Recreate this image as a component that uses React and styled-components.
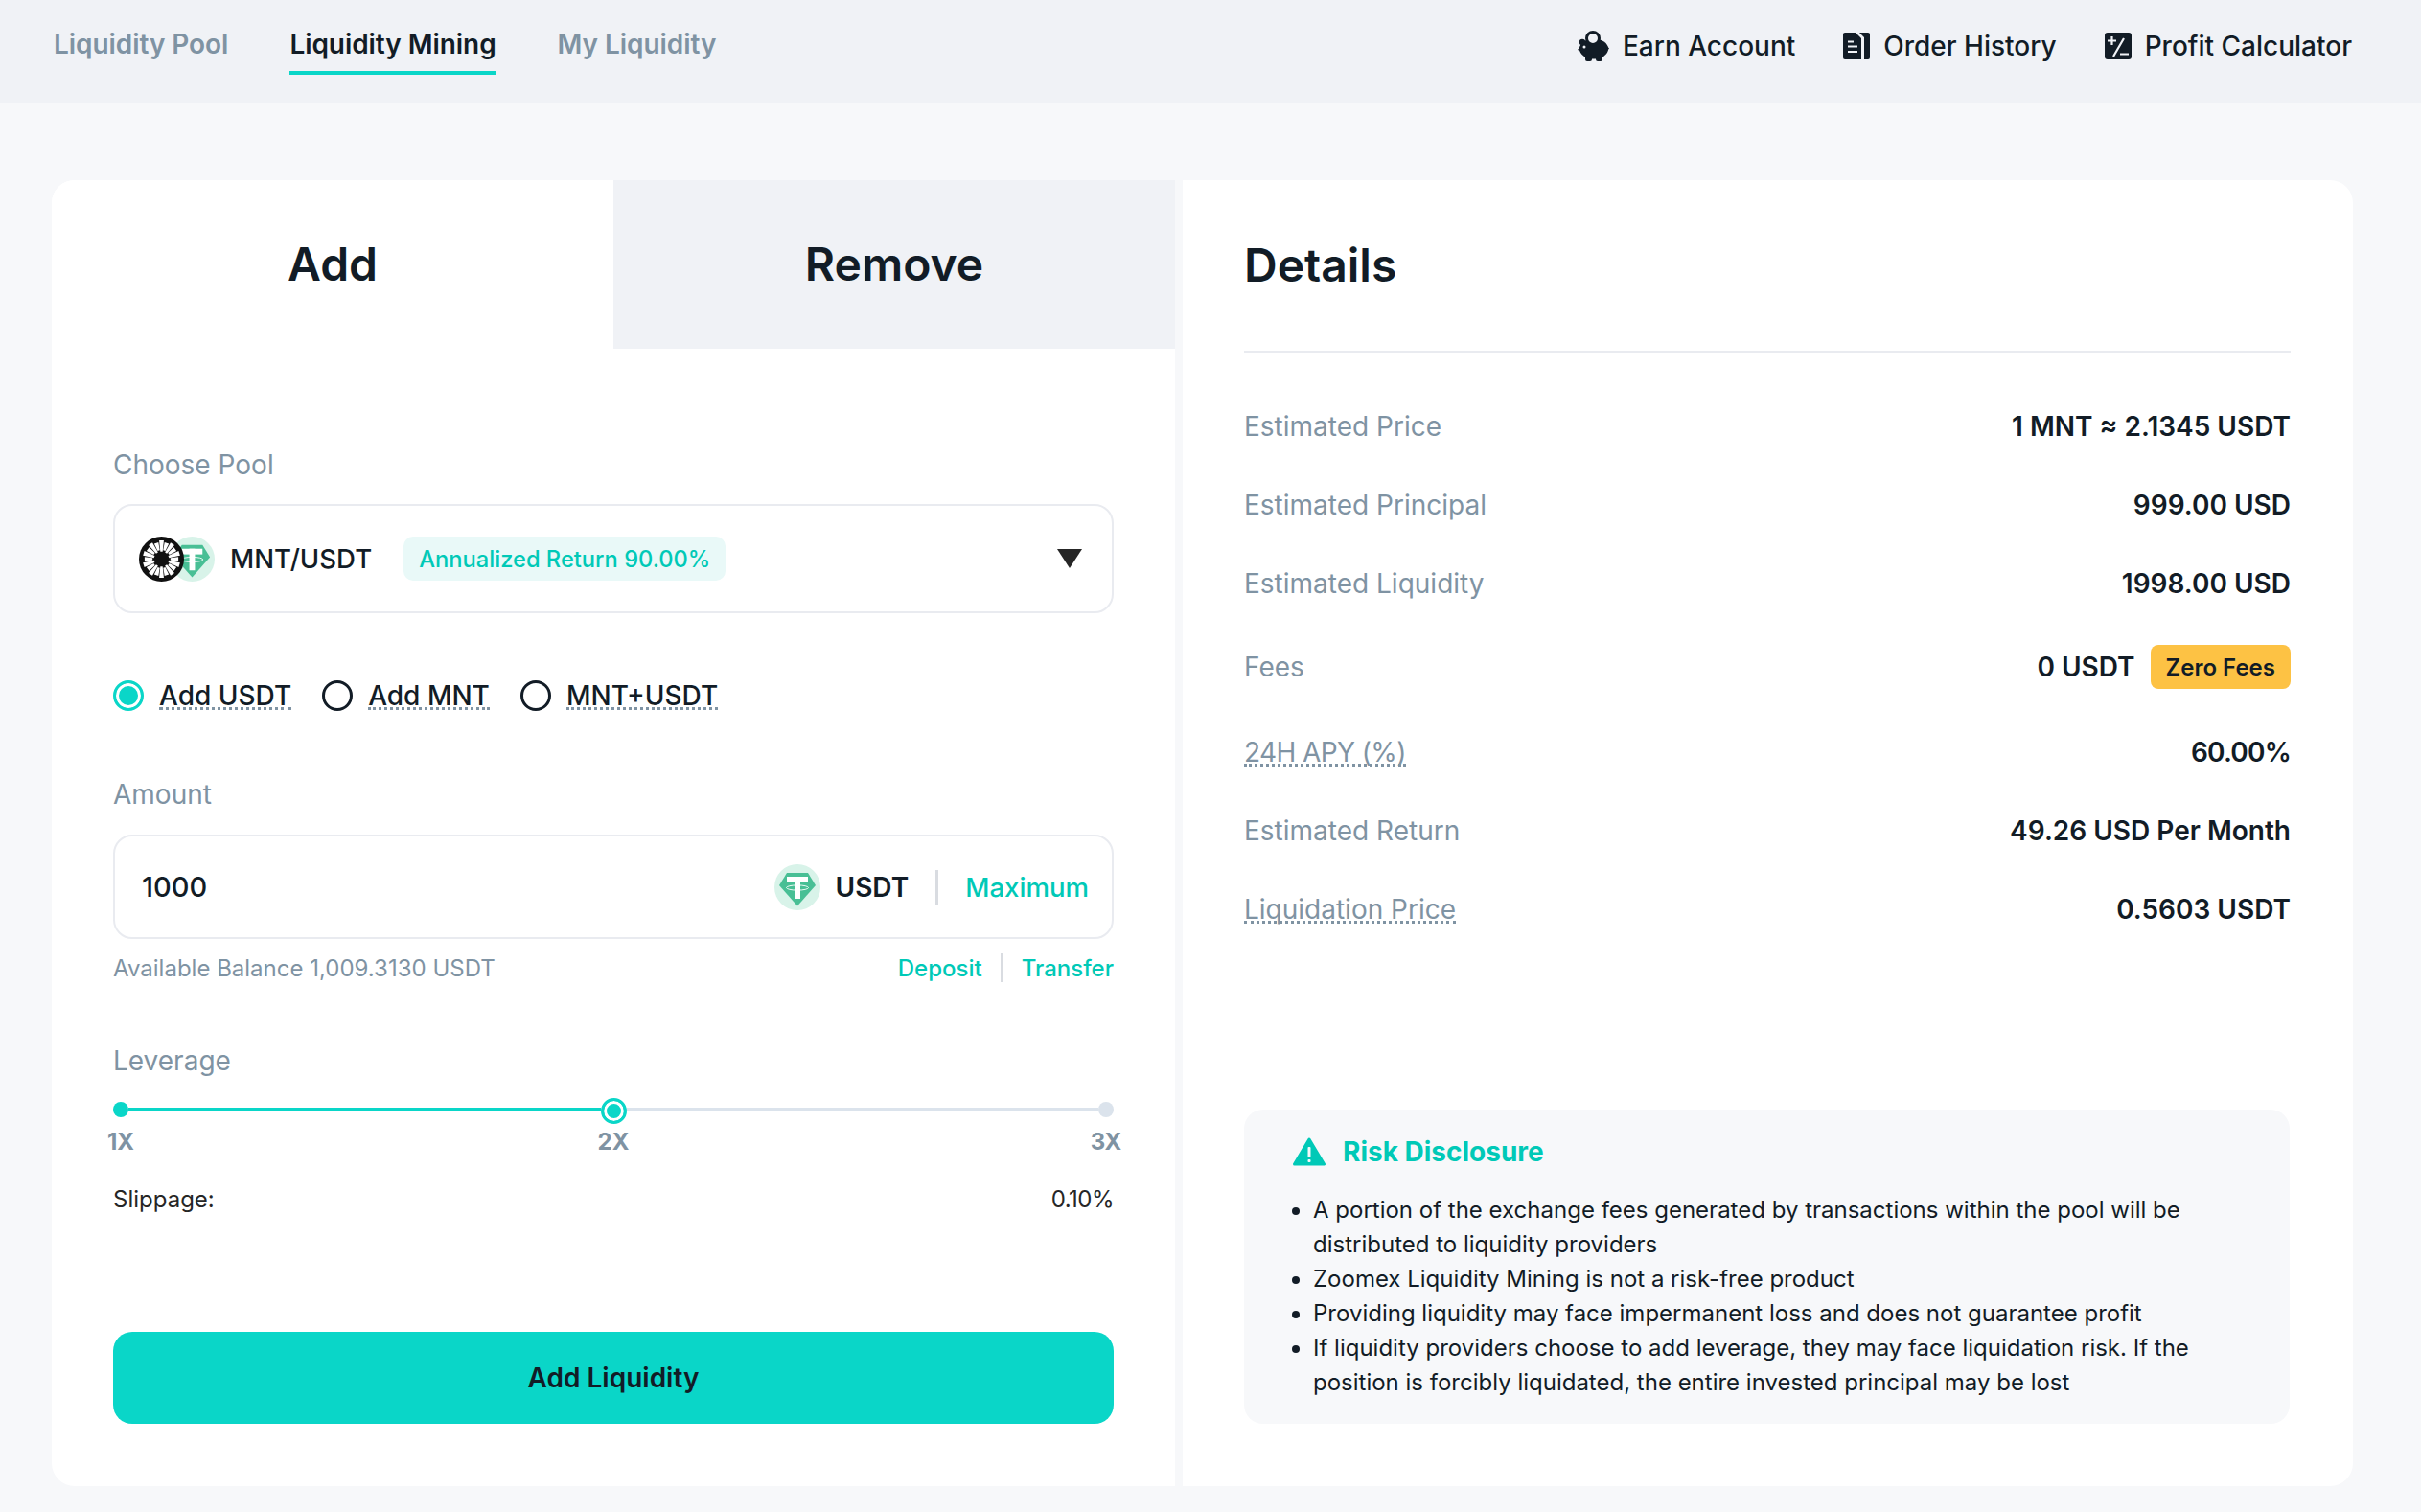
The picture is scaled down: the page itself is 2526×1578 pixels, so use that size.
import React from "react";
import styled, { createGlobalStyle } from "styled-components";

const GlobalStyle = createGlobalStyle`
  html, body {
    margin: 0;
    padding: 0;
    background: #f7f8fa;
  }
  body {
    font-family: Inter, "Liberation Sans", sans-serif;
    color: #121c26;
  }
  * {
    box-sizing: border-box;
  }
`;

const Page = styled.div`
  width: 2526px;
  height: 1578px;
  display: flex;
  flex-direction: column;
  overflow: hidden;
`;

const Header = styled.header`
  height: 108px;
  flex: none;
  padding: 0 72px 0 56px;
  background: #f0f2f6;
  display: flex;
  justify-content: space-between;
`;

const NavTabs = styled.nav`
  display: flex;
  gap: 64px;
`;

const NavTab = styled.a`
  height: 78px;
  padding-top: 26px;
  font-size: 28px;
  line-height: 40px;
  font-weight: 600;
  letter-spacing: -0.06px;
  color: ${p => (p.$active ? "#121c26" : "#7f93a3")};
  border-bottom: 4px solid ${p => (p.$active ? "#0ad6c8" : "transparent")};
`;

const NavLinks = styled.div`
  display: flex;
  gap: 50px;
  align-items: center;
  height: 96px;
`;

const NavLink = styled.a`
  display: flex;
  align-items: center;
  gap: 14px;
  font-size: 28px;
  font-weight: 500;
  color: #121c26;
`;

const Main = styled.main`
  flex: 1;
  padding: 80px 71px 27px 54px;
  display: flex;
  gap: 8px;
`;

const Panel = styled.section`
  background: #fff;
  width: ${p => p.$width}px;
  border-radius: ${p => p.$radius};
  overflow: hidden;
  display: flex;
  flex-direction: column;
`;

const Tabs = styled.div`
  display: grid;
  grid-template-columns: 1fr 1fr;
  height: 176px;
  flex: none;
`;

const Tab = styled.div`
  display: flex;
  align-items: center;
  justify-content: center;
  padding-bottom: 2px;
  font-size: 48px;
  font-weight: 600;
  background: ${p => (p.$active ? "#fff" : "#f0f2f6")};
`;

const Form = styled.div`
  flex: 1;
  padding: 100px 64px 65px;
  display: flex;
  flex-direction: column;
`;

const FieldLabel = styled.div`
  font-size: 28px;
  line-height: 42px;
  color: #7f93a3;
  margin-top: ${p => p.$top || 0}px;
`;

const SelectBox = styled.div`
  margin-top: 20px;
  height: 114px;
  border: 2px solid #e9ebf0;
  border-radius: 20px;
  padding: 0 31px 0 25px;
  display: flex;
  align-items: center;
`;

const CoinPair = styled.div`
  display: flex;
  width: 79px;
  flex: none;
`;

const Coin = styled.svg`
  width: ${p => p.$size}px;
  height: ${p => p.$size}px;
  flex: none;
  margin-left: ${p => p.$overlap || 0}px;
  position: relative;
  z-index: ${p => p.$z || 0};
`;

const PoolName = styled.span`
  margin-left: 16px;
  font-size: 27.6px;
  font-weight: 500;
`;

const ReturnBadge = styled.span`
  margin-left: 33px;
  height: 46px;
  padding: 0 16px;
  border-radius: 10px;
  background: #e9f9f8;
  color: #00c9b7;
  font-size: 23.7px;
  font-weight: 500;
  display: flex;
  align-items: center;
`;

const Caret = styled.span`
  margin-left: auto;
  width: 0;
  height: 0;
  border-left: 13px solid transparent;
  border-right: 13px solid transparent;
  border-top: 20px solid #262626;
`;

const RadioRow = styled.div`
  margin-top: 70px;
  display: flex;
  gap: 32px;
`;

const RadioItem = styled.label`
  display: flex;
  align-items: center;
  gap: 16px;
`;

const RadioMark = styled.span`
  width: 32px;
  height: 32px;
  border-radius: 50%;
  border: 3px solid ${p => (p.$on ? "#0ad6c8" : "#121c26")};
  background: ${p => (p.$on ? "#0ad6c8" : "#fff")};
  box-shadow: ${p => (p.$on ? "inset 0 0 0 3px #fff" : "none")};
`;

const RadioText = styled.span`
  padding-top: 3px;
  font-size: 28px;
  line-height: 24px;
  font-weight: 500;
  border-bottom: 3px dotted #7f93a3;
`;

const AmountBox = styled.div`
  margin-top: 21px;
  height: 109px;
  border: 2px solid #e9ebf0;
  border-radius: 20px;
  padding: 0 24px 0 28px;
  display: flex;
  align-items: center;
`;

const AmountValue = styled.span`
  flex: 1;
  font-size: 29px;
  font-weight: 500;
`;

const CoinName = styled.span`
  margin-left: 16px;
  font-size: 28px;
  font-weight: 600;
`;

const VLine = styled.span`
  width: 3px;
  height: ${p => p.$h}px;
  margin: 0 ${p => p.$gap}px;
  background: #d9dce1;
`;

const Accent = styled.span`
  color: #00c9b7;
  font-size: ${p => p.$size}px;
  font-weight: 500;
`;

const BalanceRow = styled.div`
  margin-top: 12px;
  display: flex;
  align-items: center;
  font-size: 24px;
  height: 36px;
  color: #7f93a3;
`;

const BalanceText = styled.span`
  flex: 1;
`;

const Slider = styled.div`
  margin-top: 16px;
  height: 28px;
  display: flex;
  align-items: center;
`;

const SliderDot = styled.span`
  width: 16px;
  height: 16px;
  flex: none;
  border-radius: 50%;
  background: ${p => (p.$on ? "#0ad6c8" : "#dbe3ec")};
`;

const SliderLine = styled.span`
  flex: 1;
  height: 4px;
  background: ${p => (p.$on ? "#0ad6c8" : "#dbe3ec")};
`;

const SliderThumb = styled.span`
  width: 27px;
  height: 27px;
  flex: none;
  margin-top: 3px;
  border-radius: 50%;
  border: 3px solid #0ad6c8;
  background: #0ad6c8;
  box-shadow: inset 0 0 0 3px #fff;
`;

const Marks = styled.div`
  margin-top: 3px;
  padding: 0 8px;
  display: flex;
  justify-content: space-between;
`;

const Mark = styled.span`
  width: 0;
  display: flex;
  justify-content: center;
  white-space: nowrap;
  font-size: 24px;
  line-height: 34px;
  font-weight: 700;
  color: #7f93a3;
`;

const SlipRow = styled.div`
  margin-top: 26px;
  display: flex;
  justify-content: space-between;
  font-size: 24px;
  line-height: 34px;
  color: #262626;
`;

const SlipValue = styled.span`
  letter-spacing: -0.5px;
`;

const SubmitButton = styled.button`
  margin-top: auto;
  height: 96px;
  border: none;
  border-radius: 20px;
  background: #0ad6c8;
  color: #121c26;
  font-family: inherit;
  font-size: 28px;
  font-weight: 600;
`;

const DetailsHead = styled.div`
  height: 180px;
  flex: none;
  margin: 0 65px 0 64px;
  padding-bottom: 2px;
  border-bottom: 2px solid #e9ebf0;
  display: flex;
  align-items: center;
  font-size: 48px;
  font-weight: 600;
`;

const Rows = styled.div`
  flex: 1;
  padding: 36px 65px 0 64px;
`;

const Row = styled.div`
  display: flex;
  justify-content: space-between;
  align-items: center;
  height: ${p => p.$h || 82}px;
  font-size: 28px;
`;

const RowLabel = styled.span`
  color: #7f93a3;
  padding-top: ${p => (p.$hint ? "3px" : "0")};
  line-height: ${p => (p.$hint ? "24px" : "36px")};
  letter-spacing: ${p => (p.$tight ? "-0.6px" : "0")};
  border-bottom: ${p => (p.$hint ? "3px dotted #7f93a3" : "none")};
`;

const RowValue = styled.span`
  display: flex;
  align-items: center;
  gap: 16px;
  font-weight: 600;
  letter-spacing: ${p => (p.$tight ? "-0.8px" : "0")};
`;

const ZeroBadge = styled.span`
  height: 46px;
  padding: 0 16px;
  border-radius: 8px;
  background: #fdc244;
  display: flex;
  align-items: center;
  font-size: 24px;
  font-weight: 600;
`;

const RiskBox = styled.aside`
  margin: 0 66px 65px 64px;
  height: 328px;
  flex: none;
  border-radius: 20px;
  background: #f7f8fa;
  padding: 26px 51px 0;
`;

const RiskTitle = styled.div`
  display: flex;
  align-items: center;
  gap: 18px;
  height: 36px;
  font-size: 28px;
  font-weight: 700;
  color: #00c9b7;
`;

const RiskList = styled.ul`
  margin: 25px 0 0;
  padding: 0 0 0 21px;
  font-size: 24px;
  line-height: 36px;
`;

const TetherCoin = ({ size, overlap, z }) => (
  <Coin viewBox="0 0 48 48" $size={size} $overlap={overlap} $z={z}>
    <circle cx="24" cy="24" r="24" fill="#d8f3e9" />
    <path d="M13 9h22l8 13-19 21.500L5 22z" fill="#48bf95" />
    <rect x="13" y="13" width="22" height="6" fill="#fff" />
    <rect x="21" y="13" width="6" height="23" fill="#fff" />
    <ellipse cx="24" cy="24.500" rx="11.500" ry="2.600" fill="none" stroke="#fff" strokeWidth="0.900" />
  </Coin>
);

const MantleCoin = () => {
  const rays = Array.from({ length: 20 }, (_, i) => i * 18);
  return (
    <Coin viewBox="0 0 48 48" $size={47} $z={1}>
      <circle cx="24" cy="24" r="24" fill="#111" />
      {rays.map((a, i) => (
        <path
          key={a}
          d={i % 2 ? "M22.800 14.500 21.600 6h4.800l-1.200 8.500z" : "M22.800 16 21.500 4h5l-1.300 12z"}
          fill="#fff"
          transform={`rotate(${a} 24 24)`}
        />
      ))}
    </Coin>
  );
};

const PiggyIcon = () => (
  <svg width="33" height="32" viewBox="0 0 33 32" fill="#121c26">
    <ellipse cx="17" cy="19" rx="15" ry="10.500" />
    <path d="M0 20l5-6 2 9zM29 14l4 4.500-3 4z" />
    <circle cx="5" cy="12" r="3.200" />
    <rect x="8" y="24" width="7" height="8" rx="2" />
    <rect x="19" y="24" width="7" height="8" rx="2" />
    <circle cx="16" cy="8" r="6.500" fill="#f0f2f6" stroke="#121c26" strokeWidth="3" />
    <circle cx="7" cy="17" r="1.500" fill="#f0f2f6" />
  </svg>
);

const OrderIcon = () => (
  <svg width="28" height="28" viewBox="0 0 28 28" fill="#121c26">
    <path d="M2 0h11l6 6v22H2a2 2 0 0 1-2-2V2a2 2 0 0 1 2-2z" />
    <path d="M17 0h9a2 2 0 0 1 2 2v24a2 2 0 0 1-2 2h-4V5z" />
    <rect x="5" y="8.500" width="6" height="2" fill="#f0f2f6" />
    <rect x="5" y="13.500" width="10" height="2" fill="#f0f2f6" />
    <rect x="5" y="19" width="10" height="2" fill="#f0f2f6" />
  </svg>
);

const CalcIcon = () => (
  <svg width="28" height="28" viewBox="0 0 28 28">
    <rect width="28" height="28" rx="3" fill="#121c26" />
    <path d="M3 8.500h9M7.500 4v9M16 22.500h9M20 6 9 25" stroke="#f0f2f6" strokeWidth="2.200" fill="none" />
  </svg>
);

const WarnIcon = () => (
  <svg width="34" height="30" viewBox="0 0 34 30">
    <path d="M17 2 32.500 28h-31z" fill="#00c9b7" stroke="#00c9b7" strokeWidth="3" strokeLinejoin="round" />
    <rect x="15.500" y="10" width="3" height="11" rx="1" fill="#f7f8fa" />
    <rect x="15.500" y="23" width="3" height="3" rx="1" fill="#f7f8fa" />
  </svg>
);

const details = [
  { label: "Estimated Price", value: "1 MNT ≈ 2.1345 USDT" },
  { label: "Estimated Principal", value: "999.00 USD" },
  { label: "Estimated Liquidity", value: "1998.00 USD" },
  { label: "Fees", value: "0 USDT", badge: "Zero Fees", h: 92 },
  { label: "24H APY (%)", value: "60.00%", hint: true, tight: true, h: 85 },
  { label: "Estimated Return", value: "49.26 USD Per Month", h: 79 },
  { label: "Liquidation Price", value: "0.5603 USDT", hint: true, h: 85 },
];

const risks = [
  "A portion of the exchange fees generated by transactions within the pool will be distributed to liquidity providers",
  "Zoomex Liquidity Mining is not a risk-free product",
  "Providing liquidity may face impermanent loss and does not guarantee profit",
  "If liquidity providers choose to add leverage, they may face liquidation risk. If the position is forcibly liquidated, the entire invested principal may be lost",
];

export default function App() {
  return (
    <Page>
      <GlobalStyle />
      <Header>
        <NavTabs>
          <NavTab>Liquidity Pool</NavTab>
          <NavTab $active>Liquidity Mining</NavTab>
          <NavTab>My Liquidity</NavTab>
        </NavTabs>
        <NavLinks>
          <NavLink><PiggyIcon />Earn Account</NavLink>
          <NavLink><OrderIcon />Order History</NavLink>
          <NavLink><CalcIcon />Profit Calculator</NavLink>
        </NavLinks>
      </Header>
      <Main>
        <Panel $width={1172} $radius="24px 0 0 24px">
          <Tabs>
            <Tab $active>Add</Tab>
            <Tab>Remove</Tab>
          </Tabs>
          <Form>
            <FieldLabel>Choose Pool</FieldLabel>
            <SelectBox>
              <CoinPair>
                <MantleCoin />
                <TetherCoin size={47} overlap={-15} />
              </CoinPair>
              <PoolName>MNT/USDT</PoolName>
              <ReturnBadge>Annualized Return 90.00%</ReturnBadge>
              <Caret />
            </SelectBox>
            <RadioRow>
              <RadioItem><RadioMark $on /><RadioText>Add USDT</RadioText></RadioItem>
              <RadioItem><RadioMark /><RadioText>Add MNT</RadioText></RadioItem>
              <RadioItem><RadioMark /><RadioText>MNT+USDT</RadioText></RadioItem>
            </RadioRow>
            <FieldLabel $top={66}>Amount</FieldLabel>
            <AmountBox>
              <AmountValue>1000</AmountValue>
              <TetherCoin size={48} />
              <CoinName>USDT</CoinName>
              <VLine $h={36} $gap={28} />
              <Accent $size={27.6}>Maximum</Accent>
            </AmountBox>
            <BalanceRow>
              <BalanceText>Available Balance 1,009.3130 USDT</BalanceText>
              <Accent $size={24}>Deposit</Accent>
              <VLine $h={30} $gap={19} />
              <Accent $size={24}>Transfer</Accent>
            </BalanceRow>
            <FieldLabel $top={58}>Leverage</FieldLabel>
            <Slider>
              <SliderDot $on />
              <SliderLine $on />
              <SliderThumb />
              <SliderLine />
              <SliderDot />
            </Slider>
            <Marks>
              <Mark>1X</Mark>
              <Mark>2X</Mark>
              <Mark>3X</Mark>
            </Marks>
            <SlipRow>
              <span>Slippage:</span>
              <SlipValue>0.10%</SlipValue>
            </SlipRow>
            <SubmitButton>Add Liquidity</SubmitButton>
          </Form>
        </Panel>
        <Panel $width={1221} $radius="0 24px 24px 0">
          <DetailsHead>Details</DetailsHead>
          <Rows>
            {details.map(d => (
              <Row key={d.label} $h={d.h}>
                <RowLabel $hint={d.hint} $tight={d.tight}>{d.label}</RowLabel>
                <RowValue $tight={d.tight}>
                  {d.value}
                  {d.badge && <ZeroBadge>{d.badge}</ZeroBadge>}
                </RowValue>
              </Row>
            ))}
          </Rows>
          <RiskBox>
            <RiskTitle><WarnIcon />Risk Disclosure</RiskTitle>
            <RiskList>
              {risks.map(r => <li key={r}>{r}</li>)}
            </RiskList>
          </RiskBox>
        </Panel>
      </Main>
    </Page>
  );
}
